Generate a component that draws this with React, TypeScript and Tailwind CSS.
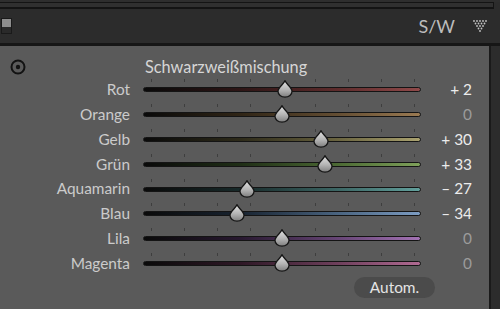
import React from "react";

type Row = { label: string; value: number; text: string; grad: string };

const rows: Row[] = [
  { label: "Rot", value: 2, text: "+ 2", grad: "bg-[linear-gradient(to_right,#0a0a0a_0%,#2e1616_35%,#5e2c2c_70%,#904a4a_100%)]" },
  { label: "Orange", value: 0, text: "0", grad: "bg-[linear-gradient(to_right,#0a0a0a_0%,#302516_35%,#644e33_70%,#9a7a52_100%)]" },
  { label: "Gelb", value: 30, text: "+ 30", grad: "bg-[linear-gradient(to_right,#0a0a0a_0%,#2e2b1a_35%,#6a6440_70%,#aaa270_100%)]" },
  { label: "Grün", value: 33, text: "+ 33", grad: "bg-[linear-gradient(to_right,#0a0a0a_0%,#1f2e16_35%,#4c6a34_70%,#7ea05a_100%)]" },
  { label: "Aquamarin", value: -27, text: "\u2013 27", grad: "bg-[linear-gradient(to_right,#0a0a0a_0%,#182a2a_35%,#3c6664_70%,#62a09c_100%)]" },
  { label: "Blau", value: -34, text: "\u2013 34", grad: "bg-[linear-gradient(to_right,#0a0a0a_0%,#182330_35%,#4a6480_70%,#7c9cc2_100%)]" },
  { label: "Lila", value: 0, text: "0", grad: "bg-[linear-gradient(to_right,#0a0a0a_0%,#281930_35%,#664575_70%,#a372b4_100%)]" },
  { label: "Magenta", value: 0, text: "0", grad: "bg-[linear-gradient(to_right,#0a0a0a_0%,#2e1826_35%,#6e405c_70%,#b06a92_100%)]" },
];

const ticks = [8, 41, 74, 107, 172, 205, 238, 271];

function Thumb({ left }: { left: number }) {
  return (
    <svg
      width="16"
      height="18"
      viewBox="0 0 16 18"
      className="absolute top-[-7px]"
      style={{ left }}
    >
      <defs>
        <linearGradient id="tg" x1="0" y1="0" x2="0" y2="1">
          <stop offset="0" stopColor="#e2e2e2" />
          <stop offset="0.55" stopColor="#b4b4b4" />
          <stop offset="1" stopColor="#7e7e7e" />
        </linearGradient>
      </defs>
      <path
        d="M8 0.8 C9.2 4 15 7.5 15 11.2 C15 14.8 11.9 17.2 8 17.2 C4.1 17.2 1 14.8 1 11.2 C1 7.5 6.8 4 8 0.8 Z"
        fill="url(#tg)"
        stroke="#151515"
        strokeWidth="1.3"
      />
    </svg>
  );
}

function Slider({ row }: { row: Row }) {
  const center = 139 + row.value * 1.31;
  return (
    <div className="relative w-[278px] h-[5px]">
      {ticks.map((t) => (
        <div key={t} className="absolute top-[-8px] w-px h-[3px] bg-[#3e3e3e]" style={{ left: t }} />
      ))}
      <div className={`h-[5px] w-full rounded-full border border-[#141414] ${row.grad}`} />
      <Thumb left={center - 8} />
    </div>
  );
}

export default function App() {
  return (
    <div
      className="w-[500px] h-[309px] overflow-hidden bg-[#2c2c2c] flex flex-col"
      style={{ fontFamily: "Lato, 'Open Sans', sans-serif" }}
    >
      {/* top strip */}
      <div className="h-[9px] flex flex-col">
        <div className="h-[2px] bg-[#2e2e2e]" />
        <div className="h-[1px] w-[494px] bg-[#141414]" />
        <div className="h-[4px] w-[494px] bg-[#303030] border-r border-[#141414]" />
        <div className="h-[2px] w-[494px] bg-[#141414]" />
      </div>
      {/* header */}
      <div className="h-[34px] flex items-center">
        <div className="ml-[1px] w-[11px] h-[16px] flex flex-col border border-[#1a1a1a]">
          <div className="h-[8px] bg-[#8e8e8e]" />
          <div className="flex-1 bg-[#2a2a2a]" />
        </div>
        <div className="flex-1" />
        <div className="text-[18px] text-[#bcbcbc] leading-none mr-[18px]">S/W</div>
        <svg width="14" height="13" viewBox="0 0 14 13" className="mr-[13px]">
          {[
            [1, 1], [4, 1], [7, 1], [10, 1], [13, 1],
            [2.5, 3.5], [5.5, 3.5], [8.5, 3.5], [11.5, 3.5],
            [4, 6], [7, 6], [10, 6],
            [5.5, 8.5], [8.5, 8.5],
            [7, 11],
          ].map(([x, y], i) => (
            <circle key={i} cx={x} cy={y} r="0.9" fill="#c4c4c4" />
          ))}
        </svg>
      </div>
      {/* separator */}
      <div className="h-[3px] bg-[#161616]" />
      {/* body */}
      <div className="flex-1 flex">
        <div className="w-[491px] bg-[#5a5a5a] border-r-2 border-[#1a1a1a] flex flex-col pt-[10px]">
          <div className="h-[21.6px] flex items-center">
            <svg width="18" height="18" viewBox="0 0 18 18" className="ml-[9px]">
              <circle cx="9" cy="9" r="6.5" fill="none" stroke="#121212" strokeWidth="2" />
              <circle cx="9" cy="9" r="2.2" fill="#121212" />
            </svg>
            <div className="ml-[118px] text-[16.3px] text-[#d6d6d6] leading-none">Schwarzweißmischung</div>
          </div>
          {rows.map((r) => (
            <div key={r.label} className="h-[24.8px] flex items-center">
              <div className="w-[130px] text-right text-[15.4px] leading-none text-[#cbcbcb]">{r.label}</div>
              <div className="ml-[13px]">
                <Slider row={r} />
              </div>
              <div
                className={`w-[51px] text-right text-[15.4px] leading-none ${
                  r.value === 0 ? "text-[#9c9c9c]" : "text-[#ececec]"
                }`}
              >
                {r.text}
              </div>
            </div>
          ))}
          <div className="flex justify-end pr-[54px] mt-[1px]">
            <div className="w-[81px] h-[21px] rounded-full bg-[#4b4b4b] flex items-center justify-center text-[15.4px] text-[#e4e4e4] leading-none">
              Autom.
            </div>
          </div>
        </div>
      </div>
    </div>
  );
}
